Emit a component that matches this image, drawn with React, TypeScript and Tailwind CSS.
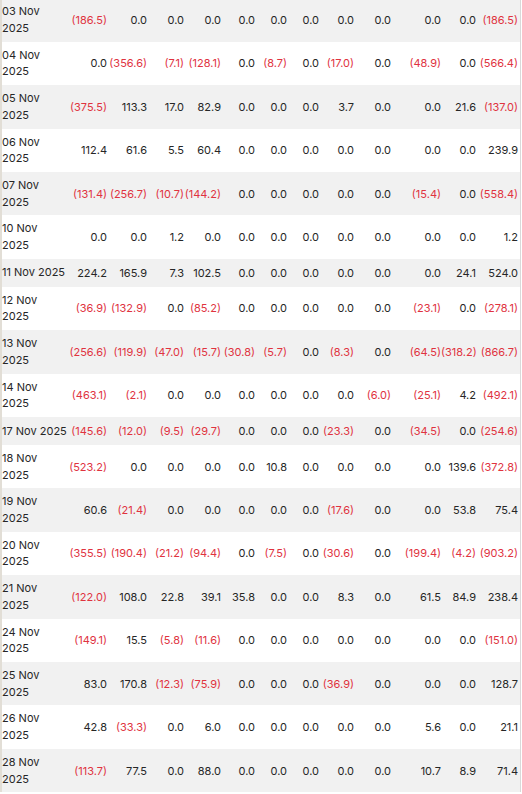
import React from "react";

type Row = { d: string; single?: boolean; v: string[] };

const rows: Row[] = [
  { d: "03 Nov", v: ["(186.5)", "0.0", "0.0", "0.0", "0.0", "0.0", "0.0", "0.0", "0.0", "0.0", "0.0", "(186.5)"] },
  { d: "04 Nov", v: ["0.0", "(356.6)", "(7.1)", "(128.1)", "0.0", "(8.7)", "0.0", "(17.0)", "0.0", "(48.9)", "0.0", "(566.4)"] },
  { d: "05 Nov", v: ["(375.5)", "113.3", "17.0", "82.9", "0.0", "0.0", "0.0", "3.7", "0.0", "0.0", "21.6", "(137.0)"] },
  { d: "06 Nov", v: ["112.4", "61.6", "5.5", "60.4", "0.0", "0.0", "0.0", "0.0", "0.0", "0.0", "0.0", "239.9"] },
  { d: "07 Nov", v: ["(131.4)", "(256.7)", "(10.7)", "(144.2)", "0.0", "0.0", "0.0", "0.0", "0.0", "(15.4)", "0.0", "(558.4)"] },
  { d: "10 Nov", v: ["0.0", "0.0", "1.2", "0.0", "0.0", "0.0", "0.0", "0.0", "0.0", "0.0", "0.0", "1.2"] },
  { d: "11 Nov", single: true, v: ["224.2", "165.9", "7.3", "102.5", "0.0", "0.0", "0.0", "0.0", "0.0", "0.0", "24.1", "524.0"] },
  { d: "12 Nov", v: ["(36.9)", "(132.9)", "0.0", "(85.2)", "0.0", "0.0", "0.0", "0.0", "0.0", "(23.1)", "0.0", "(278.1)"] },
  { d: "13 Nov", v: ["(256.6)", "(119.9)", "(47.0)", "(15.7)", "(30.8)", "(5.7)", "0.0", "(8.3)", "0.0", "(64.5)", "(318.2)", "(866.7)"] },
  { d: "14 Nov", v: ["(463.1)", "(2.1)", "0.0", "0.0", "0.0", "0.0", "0.0", "0.0", "(6.0)", "(25.1)", "4.2", "(492.1)"] },
  { d: "17 Nov", single: true, v: ["(145.6)", "(12.0)", "(9.5)", "(29.7)", "0.0", "0.0", "0.0", "(23.3)", "0.0", "(34.5)", "0.0", "(254.6)"] },
  { d: "18 Nov", v: ["(523.2)", "0.0", "0.0", "0.0", "0.0", "10.8", "0.0", "0.0", "0.0", "0.0", "139.6", "(372.8)"] },
  { d: "19 Nov", v: ["60.6", "(21.4)", "0.0", "0.0", "0.0", "0.0", "0.0", "(17.6)", "0.0", "0.0", "53.8", "75.4"] },
  { d: "20 Nov", v: ["(355.5)", "(190.4)", "(21.2)", "(94.4)", "0.0", "(7.5)", "0.0", "(30.6)", "0.0", "(199.4)", "(4.2)", "(903.2)"] },
  { d: "21 Nov", v: ["(122.0)", "108.0", "22.8", "39.1", "35.8", "0.0", "0.0", "8.3", "0.0", "61.5", "84.9", "238.4"] },
  { d: "24 Nov", v: ["(149.1)", "15.5", "(5.8)", "(11.6)", "0.0", "0.0", "0.0", "0.0", "0.0", "0.0", "0.0", "(151.0)"] },
  { d: "25 Nov", v: ["83.0", "170.8", "(12.3)", "(75.9)", "0.0", "0.0", "0.0", "(36.9)", "0.0", "0.0", "0.0", "128.7"] },
  { d: "26 Nov", v: ["42.8", "(33.3)", "0.0", "6.0", "0.0", "0.0", "0.0", "0.0", "0.0", "5.6", "0.0", "21.1"] },
  { d: "28 Nov", v: ["(113.7)", "77.5", "0.0", "88.0", "0.0", "0.0", "0.0", "0.0", "0.0", "10.7", "8.9", "71.4"] },
];

export default function App() {
  return (
    <div className="w-[522px] h-[794px] overflow-hidden bg-white [font-family:Inter,'Noto_Sans',sans-serif] text-[11px] text-[#262626]">
      <div className="w-[521px] border-l-2 border-r border-l-[#e2ded6] border-r-[#d9d9d9] -mt-[1.7px] flex flex-col">
        {rows.map((r, i) => (
          <div
            key={i}
            className={`grid grid-cols-[60px_45px_40px_37px_37px_34px_32px_32px_35px_37px_50px_35px_42px] items-center pr-[2px] ${
              i % 2 === 0 ? "bg-[#f1f1f1]" : "bg-white"
            }`}
          >
            <div className="py-[5px] leading-[16.7px] whitespace-nowrap">
              {r.single ? (
                <span>{r.d} 2025</span>
              ) : (
                <>
                  {r.d}
                  <br />
                  2025
                </>
              )}
            </div>
            {r.v.map((x, j) => (
              <div
                key={j}
                className={`py-[5px] leading-[18px] text-right whitespace-nowrap ${
                  x.startsWith("(") ? "text-[#e0333f]" : ""
                }`}
              >
                {x}
              </div>
            ))}
          </div>
        ))}
      </div>
    </div>
  );
}
